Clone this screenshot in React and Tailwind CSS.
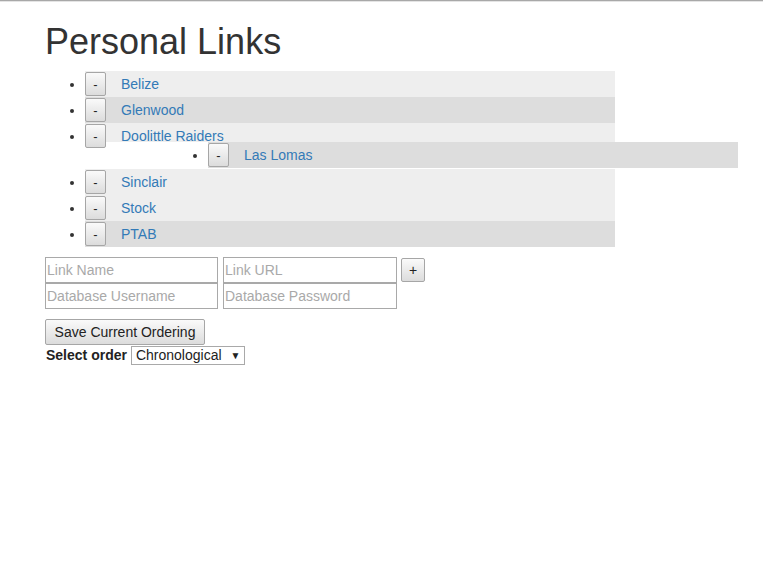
import React from "react";

const font = "font-['Liberation_Sans',Arial,sans-serif]";

const MinusButton = () => (
  <button className="h-[24px] w-[21px] shrink-0 rounded-[2px] border border-[#a6a6a6] bg-gradient-to-b from-[#fafafa] to-[#dcdcdc] text-[13px] leading-none text-[#222]">
    -
  </button>
);

const LinkRow = ({ name, shade, short }) => (
  <li className="text-[#333]">
    <div
      className={`flex w-[530px] items-start ${short ? "h-[19px]" : "h-[26px]"} ${
        shade ? "bg-[#dddddd]" : "bg-[#eeeeee]"
      }`}
    >
      <div className="mt-px">
        <MinusButton />
      </div>
      <a className="ml-[15px] mt-[4px] text-[14px] leading-[18px] text-[#337ab7]">{name}</a>
    </div>
  </li>
);

export default function App() {
  return (
    <div className={`min-h-[573px] bg-white ${font} text-[14px] text-[#333]`}>
      <div className="h-px bg-[#a8a8a8]" />
      <div className="h-px bg-[#e4e4e4]" />
      <div className="pl-[45px]">
        <h1 className="mt-[20px] text-[36px] leading-[40px] text-[#333]">Personal Links</h1>
        <ul className="mt-[9px] list-disc pl-[40px]">
          <LinkRow name="Belize" />
          <LinkRow name="Glenwood" shade />
          <LinkRow name="Doolittle Raiders" short />
          <li className="list-none">
            <ul className="list-disc pl-[123px]">
              <LinkRow name="Las Lomas" shade />
            </ul>
          </li>
          <li className="h-px list-none" />
          <LinkRow name="Sinclair" />
          <LinkRow name="Stock" />
          <LinkRow name="PTAB" shade />
        </ul>
        <div className="mt-[10px] flex items-start">
          <div className="flex flex-col">
            <div className="flex gap-[5px]">
              <input
                placeholder="Link Name"
                className="h-[26px] w-[173px] border border-[#a9a9a9] px-[1px] text-[14px] placeholder:text-[#a9a9a9]"
              />
              <input
                placeholder="Link URL"
                className="h-[26px] w-[174px] border border-[#a9a9a9] px-[1px] text-[14px] placeholder:text-[#a9a9a9]"
              />
            </div>
            <div className="flex gap-[5px]">
              <input
                placeholder="Database Username"
                className="h-[26px] w-[173px] border border-[#a9a9a9] px-[1px] text-[14px] placeholder:text-[#a9a9a9]"
              />
              <input
                placeholder="Database Password"
                className="h-[26px] w-[174px] border border-[#a9a9a9] px-[1px] text-[14px] placeholder:text-[#a9a9a9]"
              />
            </div>
          </div>
          <button className="ml-[4px] mt-px h-[24px] w-[24px] rounded-[2px] border border-[#a6a6a6] bg-gradient-to-b from-[#fafafa] to-[#dcdcdc] text-[14px] leading-none text-[#222]">
            +
          </button>
        </div>
        <button className="mt-[10px] h-[26px] w-[160px] rounded-[2px] border border-[#a6a6a6] bg-gradient-to-b from-[#fafafa] to-[#dcdcdc] text-[14px] text-[#222]">
          Save Current Ordering
        </button>
        <div className="flex items-center">
          <span className="ml-px text-[14px] font-bold text-[#222]">Select order</span>
          <div className="ml-[4px] flex h-[19px] w-[114px] items-center border border-[#a9a9a9] pl-[4px] text-[14px] text-[#222]">
            <span>Chronological</span>
            <span className="ml-[9px] text-[10px]">▼</span>
          </div>
        </div>
      </div>
    </div>
  );
}
